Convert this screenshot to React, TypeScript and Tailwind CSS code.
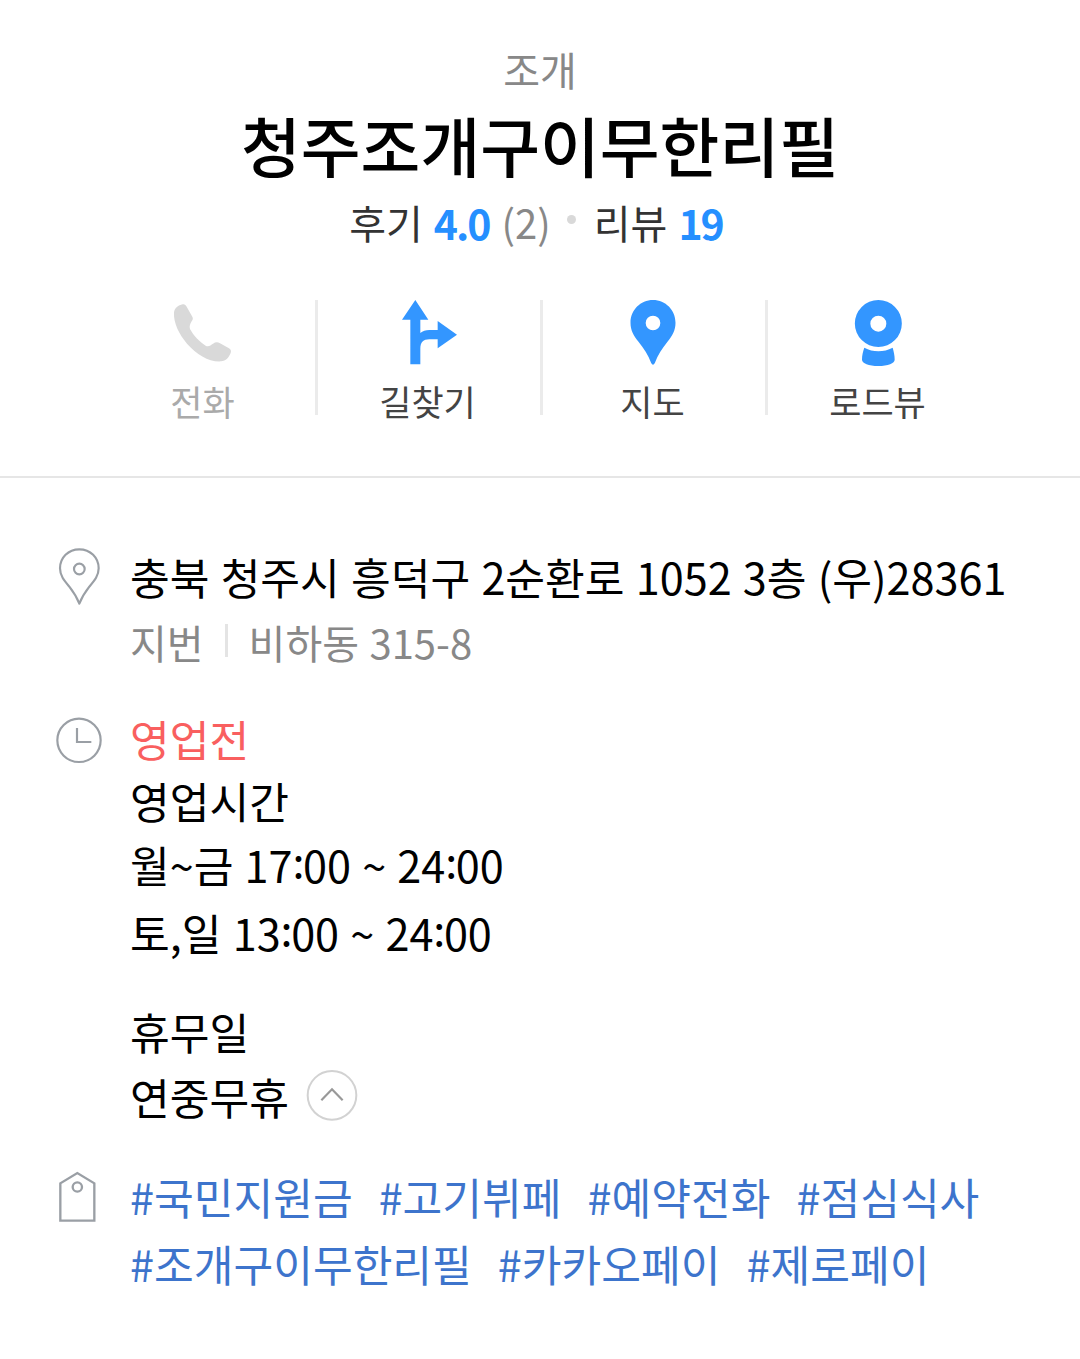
import type { ReactNode } from "react";
import clsx from "clsx";

interface Action {
  label: string;
  icon: ReactNode;
  disabled?: boolean;
}

const actions: Action[] = [
  {
    label: "전화",
    disabled: true,
    icon: (
      <svg viewBox="69 45 180 198" className="h-[66px] w-[60px] shrink-0 fill-[#d9d9d9]">
        <path d="M72 82C74 69 85 61 98 58C104 57 107 60 110 65L127 95C130 101 128 104 125 109C121 116 117 124 120 132C130 151 148 170 167 182C176 187 182 180 189 176C197 171 203 171 210 175L237 190C243 194 244 198 242 204C237 217 228 228 213 229C176 231 141 209 111 176C88 149 70 115 72 82Z" />
      </svg>
    ),
  },
  {
    label: "길찾기",
    icon: (
      <svg viewBox="744 45 180 198" className="h-[66px] w-[60px] shrink-0 fill-[#3396ff]">
        <path d="M796 45L835 104H811V144C818 138 827 135 838 135H863V108L921 149L863 190V163H838C820 163 811 172 811 190V238H781V104H756Z" />
      </svg>
    ),
  },
  {
    label: "지도",
    icon: (
      <svg viewBox="67.5 45 180 198" className="h-[66px] w-[60px] shrink-0 fill-[#3396ff]">
        <path
          fillRule="evenodd"
          d="M157.5 45C195 45 225 75 225 113C225 136 216 151 201 170C184 191 172 210 163 234Q157.5 244 152 234C143 210 131 191 114 170C99 151 90 136 90 113C90 75 120 45 157.5 45ZM157.5 92A22 22 0 1 0 157.5 136A22 22 0 1 0 157.5 92Z"
        />
      </svg>
    ),
  },
  {
    label: "로드뷰",
    icon: (
      <svg viewBox="744 45 180 198" className="h-[66px] w-[60px] shrink-0 fill-[#3396ff]">
        <path
          fillRule="evenodd"
          d="M835 45A70.500 70.500 0 1 0 835 186A70.500 70.500 0 1 0 835 45ZM835 92A24 24 0 1 1 835 140A24 24 0 1 1 835 92Z"
        />
        <path d="M793 188C819 202 851 202 878 188C881 199 884 211 884 224C884 234 864 243 835 243C806 243 786 234 786 224C786 211 789 199 793 188Z" />
      </svg>
    ),
  },
];

const tagRows = [
  ["#국민지원금", "#고기뷔페", "#예약전화", "#점심식사"],
  ["#조개구이무한리필", "#카카오페이", "#제로페이"],
];

// The colon sits at the middle of the digits, not on the baseline
function Time({ value }: { value: string }) {
  const [hour, minute] = value.split(":");
  return (
    <span>
      {hour}
      <span className="align-[5px] leading-none tracking-[-1.5px]">:</span>
      {minute}
    </span>
  );
}

function InfoRow({ icon, className, children }: { icon: ReactNode; className?: string; children: ReactNode }) {
  return (
    <div className={clsx("flex items-start", className)}>
      <div className="w-[75px] shrink-0">{icon}</div>
      <div className="flex-1 whitespace-nowrap">{children}</div>
    </div>
  );
}

export default function App() {
  return (
    <div className="h-[1359px] w-[1080px] overflow-hidden bg-white font-['Noto_Sans_CJK_KR',sans-serif] text-black">
      <header className="flex h-[478px] flex-col items-center border-b-2 border-[#e6e6e6] pt-[44px]">
        <p className="text-[40px] leading-[50px] text-[#888]">조개</p>
        <h1 className="mt-[5px] text-[65px] font-medium leading-[90px]">청주조개구이무한리필</h1>
        <div className="mt-2 flex items-center pr-[8px] text-[40px] leading-[50px] text-[#333]">
          <span>후기</span>
          <span className="ml-[11px] text-[41px] font-bold tracking-[-2px] text-[#258fff]">4.0</span>
          <span className="ml-[12px] text-[#888]">(2)</span>
          <span className="mb-[6px] ml-[16px] mr-[18px] size-[9px] rounded-full bg-[#d9d9d9]" />
          <span>리뷰</span>
          <span className="ml-[11px] text-[41px] font-bold tracking-[-2px] text-[#258fff]">19</span>
        </div>
        <nav className="mt-[53px] flex">
          {actions.map((action, i) => (
            <a
              key={action.label}
              className={clsx("flex h-[115px] w-[225px] flex-col items-center", i > 0 && "border-l-3 border-[#ebebeb] pr-[3px]")}
            >
              {action.icon}
              <span className={clsx("mt-[15px] text-[35px] leading-[40px]", action.disabled ? "text-[#aaa]" : "text-[#444]")}>
                {action.label}
              </span>
            </a>
          ))}
        </nav>
      </header>

      <main className="pl-[55px] pt-[68px] text-[43.2px] leading-[60px] [word-spacing:1.5px]">
        <InfoRow
          icon={
            <svg viewBox="45 51 144 180" className="mt-px h-[60px] w-[48px] fill-none stroke-[#9a9fa5] stroke-[6.500] [stroke-linejoin:round]">
              <path d="M118 58C151 58 176 83 176 115C176 137 164 151 148 170C134 188 125 203 118 221C111 203 102 188 88 170C72 151 60 137 60 115C60 83 85 58 118 58Z" />
              <circle cx="118" cy="117" r="16" />
            </svg>
          }
        >
          <p>충북 청주시 흥덕구 2순환로 1052 3층 (우)28361</p>
          <p className="mt-[6px] flex items-center text-[40px] text-[#888]">
            지번
            <span className="mx-[21px] mb-[3px] h-[33px] w-[3px] bg-[#e4e4e4]" />
            비하동 315-8
          </p>
        </InfoRow>

        <InfoRow
          className="mt-[36px]"
          icon={
            <svg viewBox="45 555 144 156" className="mt-[7px] h-[52px] w-[48px] fill-none stroke-[#9a9fa5] stroke-[6.500]">
              <circle cx="117" cy="631" r="65" />
              <path d="M111 594V636H154" />
            </svg>
          }
        >
          <p className="text-[#f95f5f]">영업전</p>
          <p className="mt-[2px]">영업시간</p>
          <p className="mt-[4px] h-[60px]">
            월~금 <Time value="17:00" /> ~ <Time value="24:00" />
          </p>
          <p className="mt-[8px] h-[60px]">
            토,일 <Time value="13:00" /> ~ <Time value="24:00" />
          </p>
          <p className="mt-[39px]">휴무일</p>
          <div className="mt-[5px] flex">
            연중무휴
            <button type="button" className="ml-[17px] mt-[3px] h-[53px] w-[52px]">
              <svg viewBox="798 57 156 159" className="h-[53px] w-[52px] fill-none">
                <circle cx="876" cy="136" r="73" className="stroke-[#d2d2d2] stroke-[6]" />
                <path d="M844 151L876 118L908 151" className="stroke-[#999] stroke-[6.500]" />
              </svg>
            </button>
          </div>
        </InfoRow>

        <InfoRow
          className="mt-[37px]"
          icon={
            <svg viewBox="45 360 144 162" className="mt-[7px] h-[54px] w-[48px] fill-none stroke-[#9a9fa5] stroke-[7]">
              <path d="M61 512V400L112 369L163 400V512Z" />
              <circle cx="112" cy="411" r="14" />
            </svg>
          }
        >
          {tagRows.map((tags) => (
            <div key={tags[0]} className="flex gap-[26px] leading-[67px] text-[#3d74cc]">
              {tags.map((tag) => (
                <span key={tag}>{tag}</span>
              ))}
            </div>
          ))}
        </InfoRow>
      </main>
    </div>
  );
}
